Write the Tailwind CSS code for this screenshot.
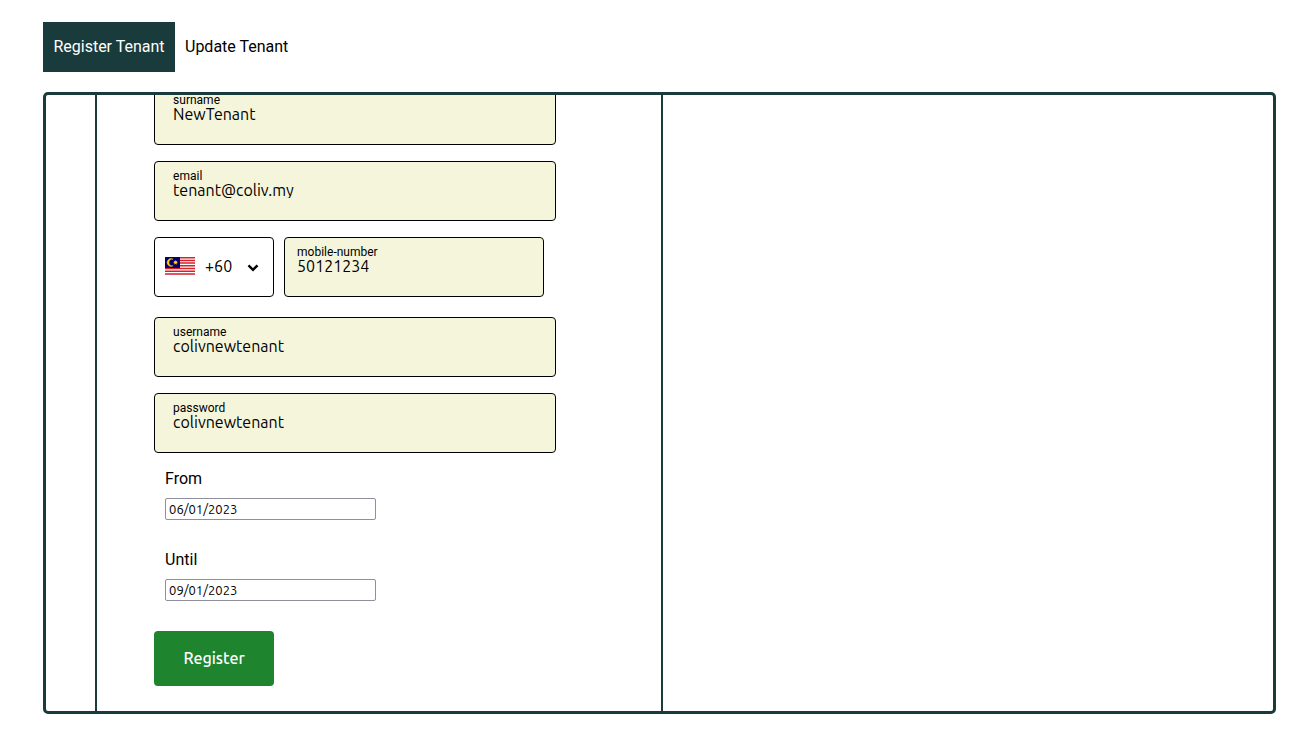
<!DOCTYPE html>
<html lang="en">
<head>
<meta charset="utf-8">
<meta name="viewport" content="width=device-width, initial-scale=1">
<title>Register Tenant</title>
<script src="https://cdn.jsdelivr.net/npm/@tailwindcss/browser@4"></script>
</head>
<body class="flex h-screen flex-col bg-white pt-[22px] pr-5 pb-[17px] pl-[43px] font-['Roboto',sans-serif] text-base text-black">
<nav class="mb-5 flex h-[50px] shrink-0">
  <button type="button" class="w-[132px] bg-[#193b3b] text-white">Register Tenant</button>
  <button type="button" class="px-[10px]">Update Tenant</button>
</nav>
<main class="flex min-h-0 flex-1 overflow-hidden rounded-[5px] border-3 border-[#193b3b]">
  <div class="w-[4%] shrink-0"></div>
  <form class="flex w-[568px] shrink-0 flex-col justify-end border-x-2 border-[#193b3b] pr-[105px] pb-[25px] pl-[57px]">
    <div class="flex flex-col gap-4">
      <div class="flex h-[60px] flex-col rounded-[4px] border border-black bg-[#f5f5dc] px-[18px] pt-2">
        <label for="surname" class="text-xs leading-3">surname</label>
        <input id="surname" type="text" value="NewTenant" class="h-4 w-full font-['Ubuntu','Noto_Sans',sans-serif] leading-4 outline-none">
      </div>
      <div class="flex h-[60px] flex-col rounded-[4px] border border-black bg-[#f5f5dc] px-[18px] pt-2">
        <label for="email" class="text-xs leading-3">email</label>
        <input id="email" type="email" value="tenant@coliv.my" class="h-4 w-full font-['Ubuntu','Noto_Sans',sans-serif] leading-4 outline-none">
      </div>
      <div class="mb-1 flex gap-[10px] pr-3">
        <button type="button" aria-label="Country code" class="flex h-[60px] w-[120px] items-center rounded-[4px] border border-black px-[10px] pb-0.5 font-['Ubuntu','Noto_Sans',sans-serif]">
          <svg class="h-[19px] w-[30px]" viewBox="0 0 30 19" preserveAspectRatio="none" aria-hidden="true">
            <rect width="30" height="19" fill="#fff"/>
            <path d="M0 .68h30M0 3.39h30M0 6.1h30M0 8.8h30M0 11.5h30M0 14.2h30M0 17h30" stroke="#d8202c" stroke-width="1.5"/>
            <rect width="15" height="11" fill="#06006b"/>
            <path d="M8.1 2.2A3.9 3.9 0 1 0 8.1 8.8A3.4 3.4 0 1 1 8.1 2.2Z" fill="#fc0" stroke="#fc0" stroke-width=".5"/>
            <path d="M10.5 2.9l.6 1.3 1.4-.4-.7 1.3 1.2.8-1.4.3.1 1.5-1.2-1-1.1 1 .1-1.5-1.4-.3 1.2-.8-.7-1.3 1.4.4z" fill="#fc0"/>
          </svg>
          <span class="ml-[10px]">+60</span>
          <svg class="mt-1 mr-1 ml-auto h-2 w-3" viewBox="0 0 12 8" fill="none" stroke="#000" stroke-width="2.4" aria-hidden="true"><path d="M1.5 1.3L6 5.8l4.500-4.500"/></svg>
        </button>
        <div class="flex h-[60px] min-w-0 flex-1 flex-col rounded-[4px] border border-black bg-[#f5f5dc] px-3 pt-2">
          <label for="mobile" class="text-xs leading-3">mobile-number</label>
          <input id="mobile" type="tel" value="50121234" class="h-4 w-full font-['Ubuntu','Noto_Sans',sans-serif] leading-4 outline-none">
        </div>
      </div>
      <div class="flex h-[60px] flex-col rounded-[4px] border border-black bg-[#f5f5dc] px-[18px] pt-2">
        <label for="username" class="text-xs leading-3">username</label>
        <input id="username" type="text" value="colivnewtenant" class="h-4 w-full font-['Ubuntu','Noto_Sans',sans-serif] leading-4 outline-none">
      </div>
      <div class="flex h-[60px] flex-col rounded-[4px] border border-black bg-[#f5f5dc] px-[18px] pt-2">
        <label for="password" class="text-xs leading-3">password</label>
        <input id="password" type="text" value="colivnewtenant" class="h-4 w-full font-['Ubuntu','Noto_Sans',sans-serif] leading-4 outline-none">
      </div>
    </div>
    <div class="mt-4 flex flex-col items-start px-[11px]">
      <label for="from" class="leading-5">From</label>
      <input id="from" type="text" value="06/01/2023" class="mt-[9px] h-[22px] w-[211px] rounded-[2px] border border-[#8f8f9d] px-[3px] font-['Ubuntu','Noto_Sans',sans-serif] text-[13px]">
      <label for="until" class="mt-[30px] leading-5">Until</label>
      <input id="until" type="text" value="09/01/2023" class="mt-[9px] h-[22px] w-[211px] rounded-[2px] border border-[#8f8f9d] px-[3px] font-['Ubuntu','Noto_Sans',sans-serif] text-[13px]">
    </div>
    <button type="submit" class="mt-[30px] h-[55px] w-[120px] shrink-0 rounded-[4px] bg-[#1e842e] pb-0.5 font-['Ubuntu','Noto_Sans',sans-serif] font-medium text-white">Register</button>
  </form>
  <section class="flex-1"></section>
</main>
</body>
</html>
